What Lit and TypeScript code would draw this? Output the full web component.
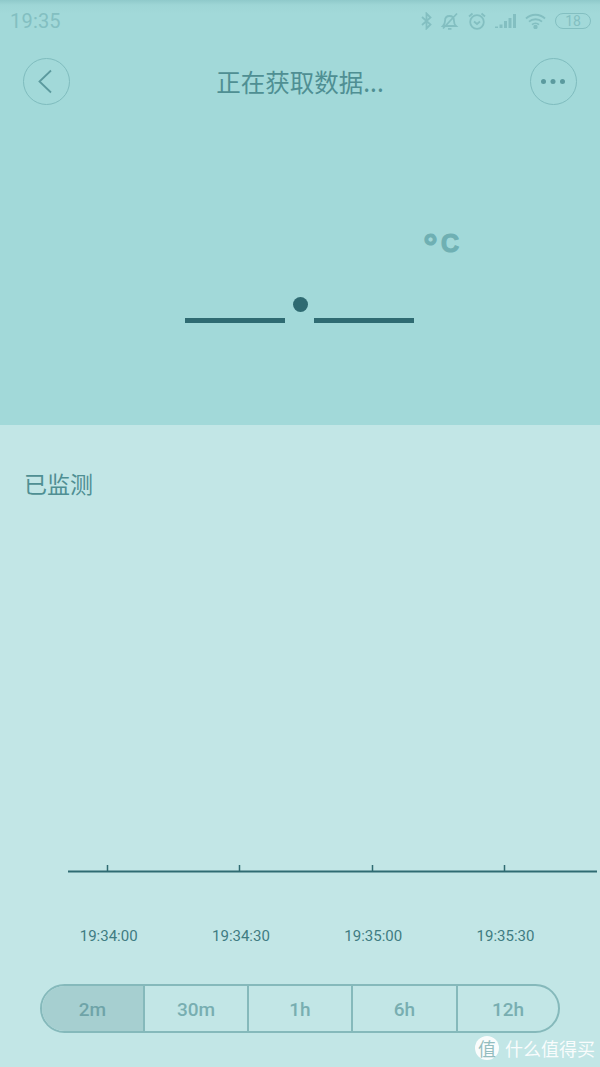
import { LitElement, html, css } from "lit";
import { customElement } from "lit/decorators.js";

const RANGES = ["2m", "30m", "1h", "6h", "12h"];
const TICKS = ["19:34:00", "19:34:30", "19:35:00", "19:35:30"];
const TICK_X = [107.5, 239.5, 372.5, 504.5];

@customElement("app-root")
export default class AppRoot extends LitElement {
  static styles = css`
    :host {
      display: block;
      position: relative;
      width: 600px;
      height: 1067px;
      overflow: hidden;
      background: #c2e6e6;
      font-family: Roboto, "Noto Sans CJK SC", sans-serif;
    }
    .top {
      height: 425px;
      display: flex;
      flex-direction: column;
      background: linear-gradient(#8fc9ca 0, #9ed6d6 5px, #a2d9d9 14px);
    }
    .status {
      height: 42px;
      padding: 0 9px 0 10px;
      display: flex;
      align-items: center;
      justify-content: space-between;
      color: #83bfc1;
      box-sizing: border-box;
    }
    .time {
      font-size: 20px;
      letter-spacing: 0.2px;
    }
    .status-icons {
      display: flex;
      align-items: center;
      gap: 9px;
    }
    .status-icons svg {
      display: block;
      fill: none;
      stroke: #83bfc1;
      stroke-width: 1.8;
    }
    .battery {
      width: 36px;
      height: 16px;
      border: 1.5px solid #83bfc1;
      border-radius: 8px;
      box-sizing: border-box;
      display: flex;
      align-items: center;
      justify-content: center;
      font-size: 14px;
      line-height: 1;
    }
    .nav {
      margin-top: 16px;
      padding: 0 23px;
      height: 47px;
      display: flex;
      align-items: center;
      justify-content: space-between;
    }
    .round {
      width: 47px;
      height: 47px;
      border: 1px solid #7fbcbe;
      border-radius: 50%;
      box-sizing: border-box;
      display: flex;
      align-items: center;
      justify-content: center;
    }
    .back {
      margin-right: 3px;
    }
    .title {
      font-size: 24.5px;
      line-height: 46px;
      color: #4f8f93;
      font-family: "Noto Sans CJK SC", sans-serif;
    }
    .reading {
      margin-top: 126px;
      display: flex;
      flex-direction: column;
      align-items: center;
    }
    .unit {
      align-self: flex-end;
      margin-right: 141px;
      height: 24px;
      display: flex;
      align-items: flex-start;
      gap: 2px;
      font-family: "Liberation Sans", sans-serif;
      font-weight: 700;
      font-size: 25px;
      line-height: 24px;
      color: #6fb0b3;
      -webkit-text-stroke: 1.2px #6fb0b3;
    }
    .deg {
      font-family: "DejaVu Sans", sans-serif;
      font-size: 34px;
      line-height: 32px;
    }
    .value {
      margin: 63px 0 0;
      display: flex;
      align-items: flex-end;
      gap: 29px;
      position: relative;
      left: -0.5px;
    }
    .dash {
      width: 100px;
      height: 5px;
      background: #2f6b72;
    }
    .dot {
      position: absolute;
      left: 107.500px;
      top: -21px;
      width: 15px;
      height: 15px;
      border-radius: 50%;
      background: #2f6b72;
    }
    .bottom {
      height: 642px;
      display: flex;
      flex-direction: column;
    }
    .heading {
      margin: 41px 0 0 24px;
      font-size: 23px;
      line-height: 34px;
      color: #4f8f93;
      font-family: "Noto Sans CJK SC", sans-serif;
    }
    .axis {
      display: block;
      margin-top: 365px;
    }
    .labels {
      margin-top: 53px;
      padding-left: 42.500px;
      display: grid;
      grid-template-columns: repeat(4, 132.3px);
      font-size: 15px;
      line-height: 20px;
      color: #3f7c82;
      text-align: center;
    }
    .ranges {
      margin: 38px 40px 0;
      height: 49px;
      display: grid;
      grid-template-columns: 101px 104px 104px 105px 1fr;
      border: 2px solid #85b9bb;
      border-radius: 25px;
      box-sizing: border-box;
      overflow: hidden;
    }
    .range {
      display: flex;
      align-items: center;
      justify-content: center;
      font-size: 19px;
      font-weight: 500;
      color: #78aeb1;
      border-left: 2px solid #85b9bb;
      padding-top: 2px;
    }
    .range:first-child {
      border-left: none;
      background: #a6cfd0;
      color: #6fa4a8;
    }
    .watermark {
      position: absolute;
      right: 5px;
      bottom: 6px;
      display: flex;
      align-items: center;
      gap: 6px;
      color: #fff;
      font-size: 18px;
      line-height: 26px;
      font-family: "Noto Sans CJK SC", sans-serif;
      opacity: 0.9;
    }
    .seal {
      width: 24px;
      height: 24px;
      border-radius: 50%;
      background: #fff;
      color: #8fb9bb;
      font-size: 18px;
      line-height: 24px;
      text-align: center;
    }
  `;

  render() {
    const ticks = TICK_X.map((x) => `M${x} 0v6`).join("");
    return html`
      <div class="top">
        <div class="status">
          <span class="time">19:35</span>
          <div class="status-icons">
            <svg width="11" height="18" viewBox="0 0 11 18">
              <path d="M1 5l8.500 7.500-4 4V1.500l4 4L1 13" />
            </svg>
            <svg width="18" height="18" viewBox="0 0 18 18">
              <path d="M2 14h13c-1.600-1.400-2-3-2-5 0-3-1.600-5-4.500-5S4 6 4 9c0 2-.5 3.600-2 5zM7 16.800h3.500M2 16.500L16 1.500" />
            </svg>
            <svg width="18" height="18" viewBox="0 0 18 18">
              <circle cx="9" cy="10" r="6.800" />
              <path d="M6 9.500l3 2.500 3-2.500M1 4.500L4.500 1.500M17 4.500L13.500 1.500" />
            </svg>
            <svg width="21" height="14" viewBox="0 0 21 14">
              <path stroke-width="3" d="M1.500 14v-1.500M6 14v-3.500M10.500 14V7M15 14V4M19.500 14V0" />
            </svg>
            <svg width="21" height="16" viewBox="0 0 21 16">
              <path d="M1 5.500c5.300-5 13.700-5 19 0M4 8.700c3.500-3.300 9.500-3.300 13 0M7 11.700c2-1.800 5-1.800 7 0" />
              <circle cx="10.500" cy="14" r="1.300" fill="#83bfc1" />
            </svg>
            <div class="battery">18</div>
          </div>
        </div>
        <div class="nav">
          <div class="round">
            <svg class="back" width="14" height="25" viewBox="0 0 14 25" fill="none" stroke="#5b9a9e" stroke-width="1.800">
              <path d="M13 1.500L1.500 12.500 13 23.500" />
            </svg>
          </div>
          <div class="title">正在获取数据...</div>
          <div class="round">
            <svg width="25" height="5" viewBox="0 0 25 5" fill="#5b9a9e">
              <circle cx="2.500" cy="2.500" r="2.500" />
              <circle cx="12" cy="2.500" r="2.500" />
              <circle cx="21.500" cy="2.500" r="2.500" />
            </svg>
          </div>
        </div>
        <div class="reading">
          <div class="unit"><span class="deg">°</span><span>C</span></div>
          <div class="value">
            <div class="dash"></div>
            <div class="dot"></div>
            <div class="dash"></div>
          </div>
        </div>
      </div>
      <div class="bottom">
        <div class="heading">已监测</div>
        <svg class="axis" width="600" height="8" viewBox="0 0 600 8" stroke="#2f6b72">
          <path d="M68 6.500H597" stroke-width="2" />
          <path d=${ticks} stroke-width="1.500" />
        </svg>
        <div class="labels">
          ${TICKS.map((t) => html`<span>${t}</span>`)}
        </div>
        <div class="ranges">
          ${RANGES.map((r) => html`<div class="range">${r}</div>`)}
        </div>
      </div>
      <div class="watermark">
        <span class="seal">值</span>
        <span>什么值得买</span>
      </div>
    `;
  }
}
